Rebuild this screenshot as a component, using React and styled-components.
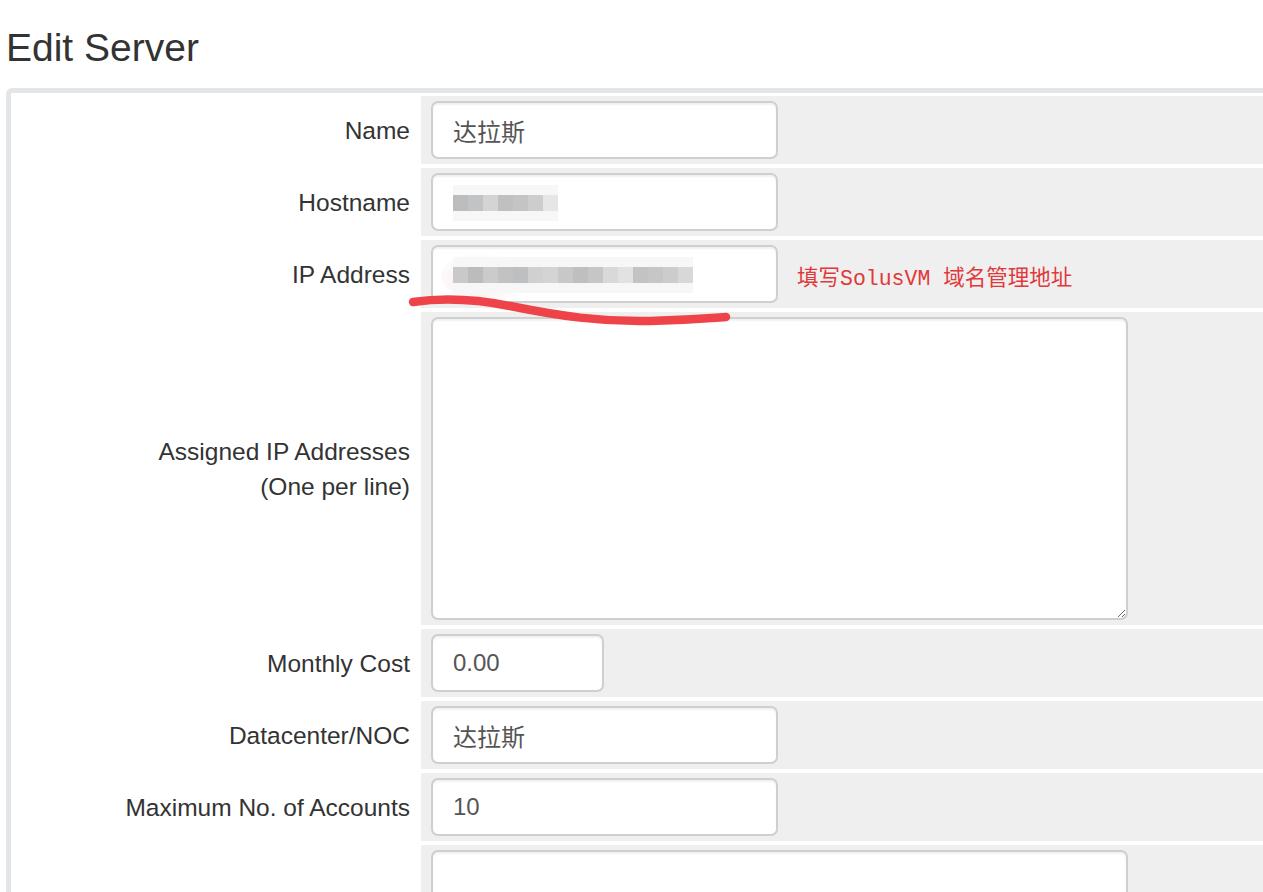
import React from 'react';
import styled, { createGlobalStyle } from 'styled-components';

const GlobalStyle = createGlobalStyle`
  html, body {
    margin: 0;
    padding: 0;
    background: #fff;
    overflow: hidden;
  }
  body {
    font-family: "Liberation Sans", Arial, "Noto Sans CJK SC", sans-serif;
    color: #333;
  }
`;

const Page = styled.div`
  padding: 26px 0 0 6px;
  width: 1320px;
  position: relative;
`;

const Title = styled.h2`
  margin: 0 0 18px;
  font-size: 39px;
  line-height: 44px;
  font-weight: 400;
  color: #333;
`;

const FormTable = styled.div`
  border: 5px solid #e3e6e9;
  border-radius: 6px;
  padding-top: 3px;
  display: grid;
  grid-template-columns: 410px 1fr;
  row-gap: 4px;
  background: #fff;
`;

const Label = styled.div`
  display: flex;
  align-items: center;
  justify-content: flex-end;
  text-align: right;
  padding-right: 11px;
  font-size: 24.5px;
  line-height: 35px;
  color: #333;
`;

const Field = styled.div`
  background: #efefef;
  padding: 5px 10px;
  display: flex;
  align-items: center;
  gap: 19px;
`;

const inputBase = `
  box-sizing: border-box;
  border: 2px solid #cfcfcf;
  border-radius: 7px;
  background: #fff;
  box-shadow: inset 0 2px 2px rgba(0, 0, 0, 0.06);
  font-family: "Liberation Sans", Arial, "Noto Sans CJK SC", sans-serif;
  font-size: 24px;
  color: #555;
  outline: none;
`;

const TextInput = styled.input`
  ${inputBase}
  width: ${({ $w }) => $w || 347}px;
  height: 58px;
  padding: 0 20px;
`;

const FakeInput = styled.div`
  ${inputBase}
  width: 347px;
  height: 58px;
  padding: 0 20px;
  display: flex;
  align-items: center;
  position: relative;
  overflow: hidden;
`;

const Area = styled.textarea`
  ${inputBase}
  width: 697px;
  height: ${({ $h }) => $h}px;
  padding: 10px 20px;
  resize: vertical;
  display: block;
`;

const Mosaic = styled.div`
  display: flex;
  height: 16px;
  margin-top: 2px;
  filter: blur(0.5px);
  box-shadow: 0 -10px 0 #f7f7f7, 0 10px 0 #f7f7f7;
`;

const Cell = styled.span`
  width: 15px;
  height: 100%;
  background: ${({ $c }) => $c};
`;

const Smudge = styled.span`
  position: absolute;
  left: 8px;
  top: 4px;
  width: 90px;
  height: 50px;
  border-radius: 50%;
  background: radial-gradient(ellipse at 40% 60%, rgba(240, 200, 200, 0.35), rgba(255, 255, 255, 0) 70%);
`;

const Note = styled.span`
  font-family: "Liberation Mono", "Noto Sans CJK SC", monospace;
  font-size: 21.5px;
  color: #e0393b;
  margin-top: 2px;
`;

const Scribble = styled.svg`
  position: absolute;
  left: 0;
  top: 0;
  pointer-events: none;
`;

const hostCells = ['#bdbdbd', '#c0c4c6', '#d4d4d4', '#c0c0c0', '#c4c4c4', '#cdcdcd', '#e6e6e6'];
const ipCells = [
  '#c9c9c9', '#bcbcbc', '#cbcbcb', '#c2c2c2', '#bdbfc0', '#d0d0d0', '#d4d4d4', '#c8c8c8',
  '#bfbfbf', '#c6c6c6', '#d9d9d9', '#e2e2e2', '#c3c3c3', '#c6c6c6', '#cccccc', '#d8d8d8',
];

const Blurred = ({ cells }) => (
  <Mosaic>
    {cells.map((c, i) => (
      <Cell key={i} $c={c} />
    ))}
  </Mosaic>
);

export default function App() {
  return (
    <Page>
      <GlobalStyle />
      <Title>Edit Server</Title>
      <FormTable>
        <Label>Name</Label>
        <Field>
          <TextInput defaultValue="达拉斯" />
        </Field>

        <Label>Hostname</Label>
        <Field>
          <FakeInput>
            <Blurred cells={hostCells} />
          </FakeInput>
        </Field>

        <Label>IP Address</Label>
        <Field>
          <FakeInput>
            <Smudge />
            <Blurred cells={ipCells} />
          </FakeInput>
          <Note>填写SolusVM 域名管理地址</Note>
        </Field>

        <Label>
          Assigned IP Addresses
          <br />
          (One per line)
        </Label>
        <Field>
          <Area $h={303} />
        </Field>

        <Label>Monthly Cost</Label>
        <Field>
          <TextInput $w={173} defaultValue="0.00" />
        </Field>

        <Label>Datacenter/NOC</Label>
        <Field>
          <TextInput defaultValue="达拉斯" />
        </Field>

        <Label>Maximum No. of Accounts</Label>
        <Field>
          <TextInput defaultValue="10" />
        </Field>

        <Label />
        <Field>
          <Area $h={200} />
        </Field>
      </FormTable>

      <Scribble width="760" height="340" viewBox="0 0 760 340">
        <path
          d="M413 302 C 440 298, 475 299, 510 306 C 560 316, 600 322, 650 321 C 690 320, 712 318, 726 317"
          fill="none"
          stroke="#ee4449"
          strokeWidth="8.5"
          strokeLinecap="round"
        />
      </Scribble>
    </Page>
  );
}
